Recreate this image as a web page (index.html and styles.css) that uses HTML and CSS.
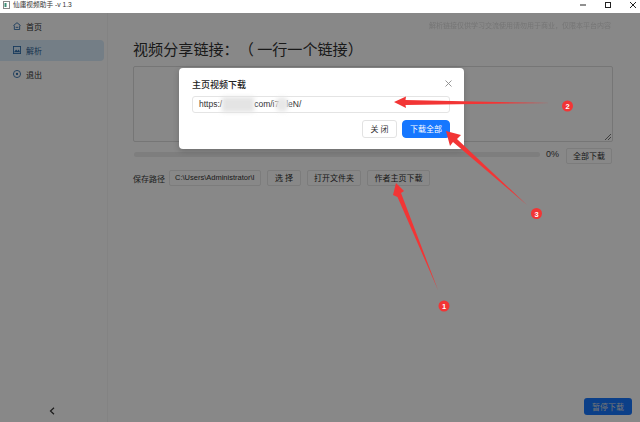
FILE: index.html
```html
<!DOCTYPE html>
<html lang="zh">
<head>
<meta charset="utf-8">
<title>仙庸视频助手</title>
<link rel="stylesheet" href="styles.css">
</head>
<body>
<div class="window">
  <header class="titlebar">
    <svg class="app-icon" width="7" height="8" viewBox="0 0 7 8"><rect x=".5" y=".5" width="6" height="7" fill="#fff" stroke="#888"/><rect x="1.500" y="2" width="2" height="4" fill="#3d8f78"/></svg>
    <span class="app-title">仙庸视频助手 -v 1.3</span>
    <div class="win-controls">
      <svg width="8" height="8" viewBox="0 0 8 8"><path d="M1 4h6" stroke="#222"/></svg>
      <svg width="8" height="8" viewBox="0 0 8 8"><rect x="1.500" y="1.500" width="5" height="5" fill="none" stroke="#222"/></svg>
      <svg width="8" height="8" viewBox="0 0 8 8"><path d="M1 1l6 6M7 1L1 7" stroke="#222"/></svg>
    </div>
  </header>
  <div class="app">
    <aside class="sidebar">
      <nav class="nav">
        <a class="nav-item">
          <svg width="8" height="8" viewBox="0 0 9 9"><path d="M.5 4L4.500 .8 8.500 4M1.500 4v4.500h6V4M3 6h3" fill="none" stroke="#2f6fae"/></svg>首页</a>
        <a class="nav-item active">
          <svg width="8" height="8" viewBox="0 0 9 9"><rect x=".5" y=".5" width="8" height="8" fill="none" stroke="#2f6fae"/><path d="M1 7l2.500-3L5 5.500 6.500 4 8 7z" fill="#2f6fae"/></svg>解析</a>
        <a class="nav-item">
          <svg width="8" height="8" viewBox="0 0 9 9"><circle cx="4.500" cy="4.500" r="4" fill="none" stroke="#2f6fae"/><circle cx="4.500" cy="4.500" r="1.300" fill="#2f6fae"/></svg>退出</a>
      </nav>
      <div class="collapse">
        <svg width="6" height="8" viewBox="0 0 6 8"><path d="M5 .8L1.500 4 5 7.200" fill="none" stroke="#333" stroke-width="1.200"/></svg>
      </div>
    </aside>
    <main class="main">
      <p class="notice">解析链接仅供学习交流使用请勿用于商业，仅限本平台内容</p>
      <h1 class="heading">视频分享链接：（ 一行一个链接）</h1>
      <div class="textarea">
        <svg class="grip" width="6" height="6" viewBox="0 0 6 6"><path d="M0 6l6-6M3 6l3-3" stroke="#555" stroke-width=".8"/></svg>
      </div>
      <div class="progress-row">
        <div class="track"></div>
        <span class="pct">0%</span>
        <button class="btn btn-all">全部下载</button>
      </div>
      <div class="path-row">
        <span class="path-label">保存路径</span>
        <span class="path-input">C:\Users\Administrator\I</span>
        <button class="btn btn-select">选 择</button>
        <button class="btn btn-folder">打开文件夹</button>
        <button class="btn btn-author">作者主页下载</button>
      </div>
      <div class="footer-row">
        <button class="btn-pause">暂停下载</button>
      </div>
    </main>
  </div>

  <div class="overlay">
    <div class="modal">
      <div class="modal-head">
        <span class="modal-title">主页视频下载</span>
        <svg class="modal-close" width="7" height="7" viewBox="0 0 7 7"><path d="M.5 .5l6 6M6.500 .5l-6 6" stroke="#8a8a8a" stroke-width=".9"/></svg>
      </div>
      <div class="modal-input">
        <span>https:/</span><span class="blur-a"></span><span>com/i7</span><span class="blur-b"></span><span>leN/</span>
      </div>
      <div class="modal-actions">
        <button class="modal-btn">关 闭</button>
        <button class="modal-btn primary">下载全部</button>
      </div>
    </div>
  </div>

  <svg class="marks" width="640" height="422" viewBox="0 0 640 422">
    <g fill="#f23535">
      <path d="M394 102L406 96.500 405.500 100 550 103 405.500 105 406 108z"/>
      <path d="M396 183L404 191 401 193 438 290 397.500 197 393 195z"/>
      <path d="M446 131L461 135 457 139 527 205 453 142 450 146z"/>
      <circle cx="444" cy="306" r="5.500"/>
      <circle cx="567.500" cy="106" r="5.500"/>
      <circle cx="536.500" cy="213.500" r="5.500"/>
    </g>
    <g class="mark-num" fill="#fff" text-anchor="middle">
      <text x="444" y="309">1</text>
      <text x="567.500" y="109">2</text>
      <text x="536.500" y="216.500">3</text>
    </g>
  </svg>
</div>
</body>
</html>
```
FILE: styles.css
```css
* { box-sizing: border-box; }
html, body { margin: 0; padding: 0; }
body { font-family: "Noto Sans CJK SC", "Liberation Sans", sans-serif; color: #222; }
.window { position: relative; width: 640px; height: 422px; overflow: hidden; background: #fff; display: flex; flex-direction: column; }

.titlebar { height: 13px; flex: none; display: flex; align-items: center; padding: 0 0 3px 3px; background: #fff; }
.app-icon { margin-right: 3px; }
.app-title { font-size: 6.700px; line-height: 10px; color: #333; font-family: "Liberation Sans", "Noto Sans CJK SC", sans-serif; }
.win-controls { margin-left: auto; display: flex; gap: 17px; padding-right: 3px; }

.app { flex: 1; display: flex; min-height: 0; }
.sidebar { width: 108px; flex: none; display: flex; flex-direction: column; background: #fff; border-right: 1px solid #f6f6f6; }
.nav { flex: 1; padding: 2.500px 3px 0 0; display: flex; flex-direction: column; gap: 3px; }
.nav-item { height: 21px; padding-left: 13px; display: flex; align-items: center; gap: 5px; font-size: 8px; color: #333; border-radius: 0 4px 4px 0; }
.nav-item.active { background: #d9ecfc; color: #2a5c93; }
.collapse { height: 19px; display: flex; justify-content: center; align-items: flex-start; padding-top: 4px; padding-right: 4px; }

.main { flex: 1; min-width: 0; padding: 0 27px 7px 25px; display: flex; flex-direction: column; background: #fff; }
.notice { margin: 8px 0 0 auto; padding-right: 2px; font-size: 7px; line-height: 9px; color: #dcdcdc; filter: blur(.5px); white-space: nowrap; }
.heading { margin: 6px 0 0; font-size: 15.100px; line-height: 24px; font-weight: 400; color: #303030; white-space: nowrap; text-spacing-trim: space-all; }
.textarea { position: relative; height: 76px; margin: 6px 0 0; border: 1px solid #ddd; border-radius: 2px; background: #fff; }
.grip { position: absolute; right: 1px; bottom: 1px; }

.progress-row { display: flex; align-items: flex-start; height: 16px; margin-top: 6px; }
.track { width: 406px; height: 5px; margin: 4px 0 0 1px; background: #ececec; border-radius: 3px; }
.pct { margin-left: 6px; width: 20px; font: 9px/12px "Liberation Sans", sans-serif; color: #444; }
.btn { height: 16px; padding: 0; border: 1px solid #e8e8e8; border-radius: 2px; background: #fff; font: 8px/1 "Noto Sans CJK SC", sans-serif; color: #2e2e2e; flex: none; }
.btn-all { width: 46px; }

.path-row { display: flex; align-items: center; height: 16px; margin-top: 6px; }
.path-label { width: 36px; font-size: 8px; color: #3b3b3b; white-space: nowrap; }
.path-input { width: 92px; height: 16px; padding-left: 5px; font: 7.500px/14px "Liberation Sans", sans-serif; color: #333; border: 1px solid #e8e8e8; border-radius: 2px; overflow: hidden; white-space: nowrap; }
.btn-select { width: 34px; margin-left: 6px; }
.btn-folder { width: 54px; margin-left: 6px; }
.btn-author { width: 63px; margin-left: 6px; }

.footer-row { margin-top: auto; display: flex; justify-content: flex-end; margin-right: -19px; }
.btn-pause { width: 48px; height: 17px; padding: 0; border: 0; border-radius: 3px; background: #1677ff; color: #dcdcdc; font: 8px/1 "Noto Sans CJK SC", sans-serif; }

.overlay { position: absolute; left: 0; right: 0; top: 13px; bottom: 0; background: rgba(0, 0, 0, .466); padding: 55px 176px 0 179px; }
.modal { height: 81px; background: #fff; border-radius: 4px; padding: 11px 14px 0 13px; box-shadow: 0 2px 6px rgba(0, 0, 0, .2); }
.modal-head { display: flex; justify-content: space-between; align-items: flex-start; height: 17px; }
.modal-title { font-size: 9px; line-height: 12px; font-weight: 500; color: #222; }
.modal-close { margin: 1px -2px 0 0; }
.modal-input { display: flex; align-items: center; height: 17px; padding-left: 6px; border: 1px solid #e4e4e4; border-radius: 3px; font: 8.500px/1 "Liberation Sans", sans-serif; color: #333; }
.blur-a { width: 32px; height: 15px; background: #e4e4e4; filter: blur(2px); }
.blur-b { width: 14px; height: 15px; margin: 0 -3px 0 -4px; background: #e8e8e8; filter: blur(2px); border-radius: 50%; }
.modal-actions { display: flex; justify-content: flex-end; gap: 5px; margin-top: 7px; }
.modal-btn { height: 18px; width: 35px; padding: 0; border: 1px solid #e2e2e2; border-radius: 3px; background: #fff; color: #333; font: 8px/1 "Noto Sans CJK SC", sans-serif; }
.modal-btn.primary { width: 48px; background: #1677ff; border-color: #1677ff; color: #fff; border-radius: 4px; }

.marks { position: absolute; left: 0; top: 0; pointer-events: none; }
.mark-num { font: 700 7.500px "Liberation Sans", sans-serif; }
```
